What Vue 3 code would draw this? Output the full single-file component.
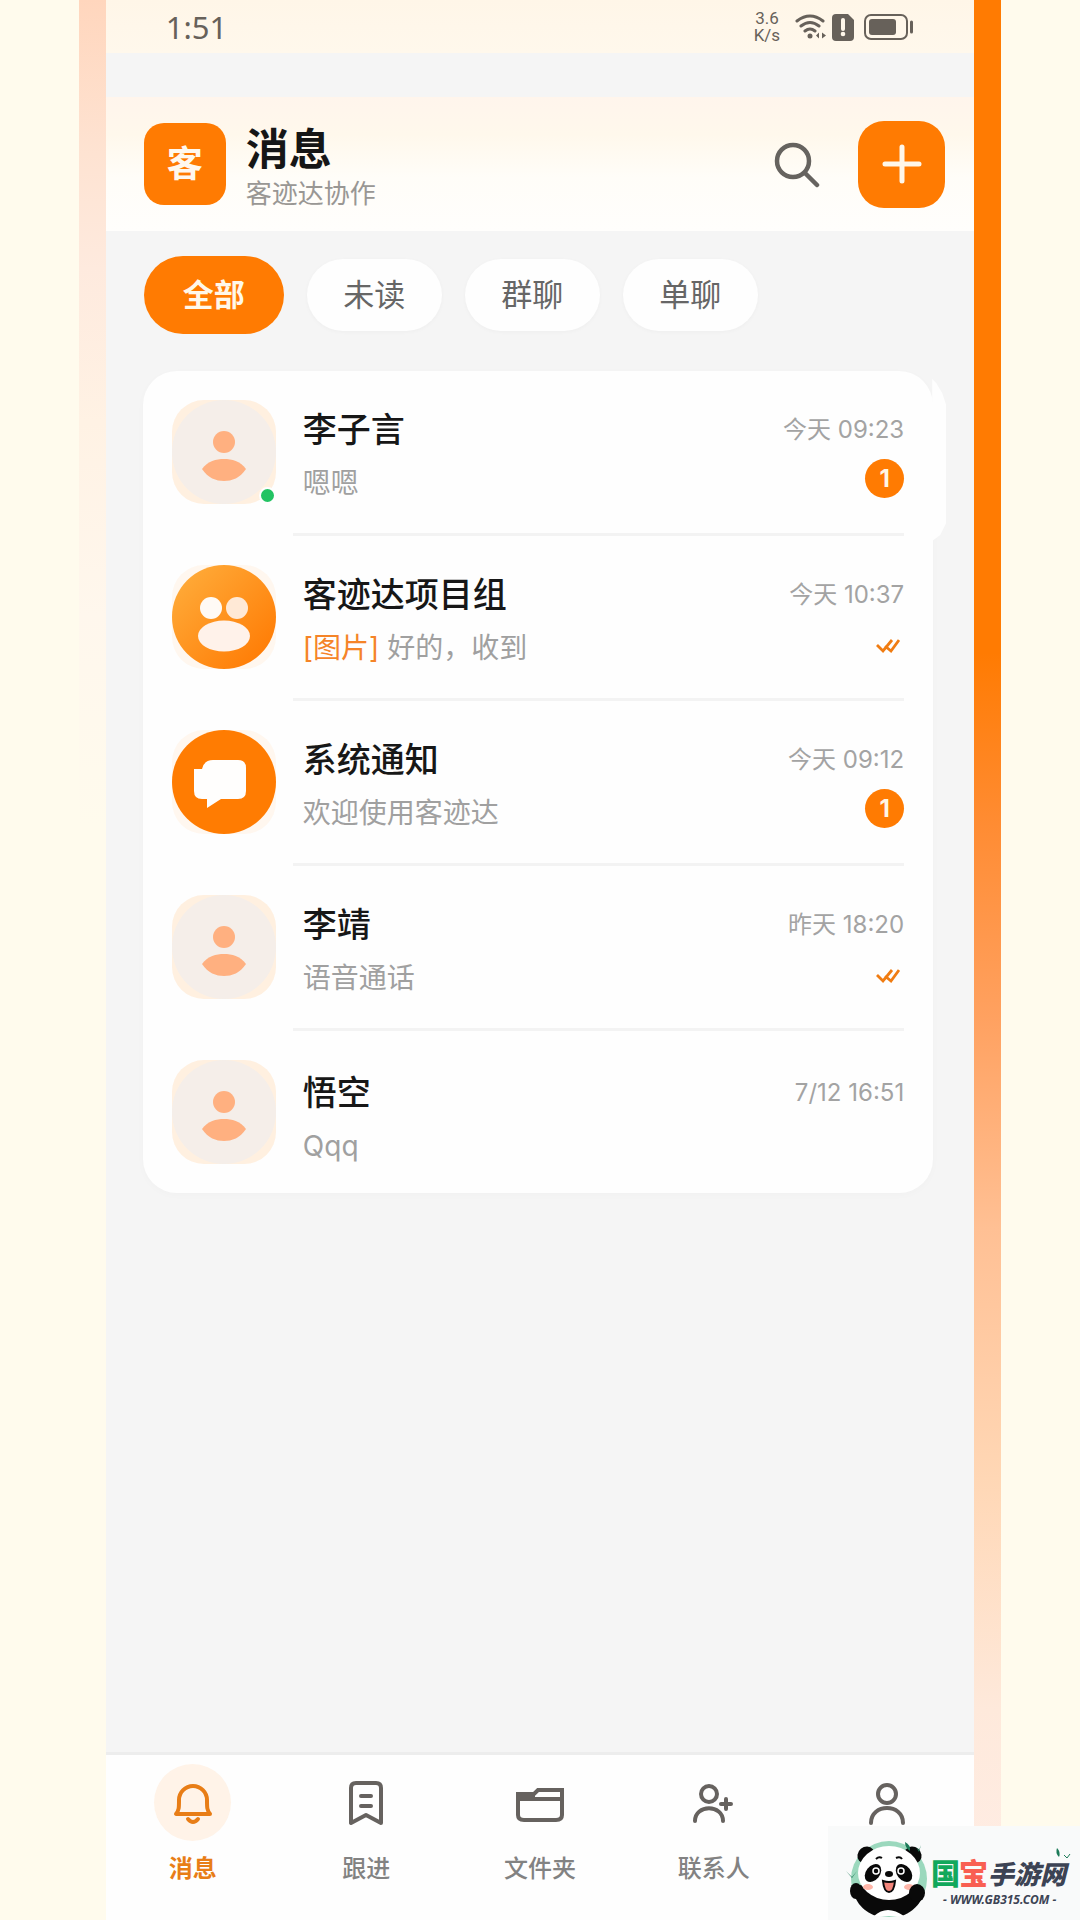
<script setup>
import { ref } from 'vue'

const filters = ['全部', '未读', '群聊', '单聊']
const activeFilter = ref('全部')

const chats = [
  { name: '李子言', text: '嗯嗯', time: '今天 09:23', avatar: 'person', online: true, unread: 1 },
  { name: '客迹达项目组', tag: '[图片]', text: '好的，收到', time: '今天 10:37', avatar: 'group', read: true },
  { name: '系统通知', text: '欢迎使用客迹达', time: '今天 09:12', avatar: 'system', unread: 1 },
  { name: '李靖', text: '语音通话', time: '昨天 18:20', avatar: 'person', read: true },
  { name: '悟空', text: 'Qqq', time: '7/12 16:51', avatar: 'person' },
]

const tabs = [
  { icon: 'bell', label: '消息' },
  { icon: 'bookmark', label: '跟进' },
  { icon: 'folder', label: '文件夹' },
  { icon: 'contacts', label: '联系人' },
  { icon: 'user', label: '' },
]
const activeTab = ref('bell')
</script>

<template>
  <div class="page">
    <div class="edge edge-left"></div>
    <main class="phone">
      <div class="status">
        <span class="clock">1:51</span>
        <div class="status-icons">
          <div class="speed">
            <span>3.6</span>
            <span>K/s</span>
          </div>
          <svg width="32" height="28" viewBox="0 0 32 28" fill="none" stroke="#67615a" stroke-width="3" stroke-linecap="round">
            <path d="M2 8Q15-2 28 8M6 13Q15 6 24 13M10 18Q15 14 20 18" />
            <circle cx="15" cy="23" r="2.500" fill="#67615a" stroke="none" />
            <path d="M24 19.500v6l-3-3zM27 19.500v6l4-3z" fill="#67615a" stroke="none" />
          </svg>
          <svg class="sim" width="22" height="28" viewBox="0 0 22 28">
            <path d="M4 1h12l6 6v17q0 4-4 4H4q-4 0-4-4V5q0-4 4-4z" fill="#67615a" />
            <path d="M11 7v9" stroke="#fff7ea" stroke-width="4" stroke-linecap="round" />
            <circle cx="11" cy="21" r="2.300" fill="#fff7ea" />
          </svg>
          <svg class="battery" width="50" height="28" viewBox="0 0 50 28">
            <rect x="1" y="2" width="42" height="24" rx="6" fill="none" stroke="#67615a" stroke-width="2" />
            <rect x="5" y="6" width="27" height="16" rx="3" fill="#67615a" />
            <path d="M47.500 9v10" stroke="#67615a" stroke-width="3" stroke-linecap="round" />
          </svg>
        </div>
      </div>

      <header class="header">
        <div class="logo">客</div>
        <div class="titles">
          <h1>消息</h1>
          <p>客迹达协作</p>
        </div>
        <button class="search" type="button" aria-label="搜索">
          <svg width="48" height="48" viewBox="0 0 48 48" fill="none" stroke="#66635f" stroke-width="4.500" stroke-linecap="round">
            <circle cx="20" cy="21" r="16" />
            <path d="M32 33l12 12" />
          </svg>
        </button>
        <button class="add" type="button" aria-label="新建">
          <svg width="40" height="40" viewBox="0 0 40 40" stroke="#fff7ea" stroke-width="5" stroke-linecap="round">
            <path d="M20 3v34M3 20h34" />
          </svg>
        </button>
      </header>

      <div class="filters">
        <button
          v-for="f in filters"
          :key="f"
          type="button"
          class="chip"
          :class="{ active: f === activeFilter }"
          @click="activeFilter = f"
        >{{ f }}</button>
      </div>

      <div class="list-wrap">
        <ul class="list">
          <li v-for="c in chats" :key="c.name" class="chat">
            <div class="avatar" :class="c.avatar">
              <svg v-if="c.avatar === 'person'" viewBox="0 0 104 104">
                <circle cx="52" cy="52" r="52" fill="#f5eee9" />
                <circle cx="52" cy="42" r="11" fill="#ffb080" />
                <path d="M30 69C36 61 44 59 52 59S68 61 74 69C68 78 60 81 52 81S36 78 30 69z" fill="#ffb080" />
              </svg>
              <svg v-else-if="c.avatar === 'group'" viewBox="0 0 104 104">
                <defs>
                  <linearGradient id="groupFill" x1="0" y1="0" x2="1" y2="1">
                    <stop offset="0.100" stop-color="#ffaa38" />
                    <stop offset="0.900" stop-color="#ff7c05" />
                  </linearGradient>
                </defs>
                <circle cx="52" cy="52" r="52" fill="url(#groupFill)" />
                <circle cx="39" cy="43" r="11" fill="#fffaf5" />
                <circle cx="65" cy="43" r="11" fill="#ffe9d6" />
                <ellipse cx="52" cy="71" rx="26" ry="15.500" fill="#fff2ea" />
              </svg>
              <svg v-else viewBox="0 0 104 104">
                <circle cx="52" cy="52" r="52" fill="#ff7c02" />
                <path d="M41 30h25q8 0 8 8v23q0 8-8 8H49l-14 9v-9H30q-8 0-8-8V39h8q2-9 11-9z" fill="#fffefd" />
              </svg>
              <span v-if="c.online" class="online"></span>
            </div>
            <div class="body">
              <div class="text">
                <h2>{{ c.name }}</h2>
                <p><span v-if="c.tag" class="tag">{{ c.tag }}</span>{{ c.tag ? ' ' : '' }}{{ c.text }}</p>
              </div>
              <div class="meta">
                <time>{{ c.time }}</time>
                <span v-if="c.unread" class="badge">{{ c.unread }}</span>
                <svg v-if="c.read" class="ticks" width="24" height="16" viewBox="0 0 24 16" fill="none" stroke="#f07c12" stroke-width="2.800">
                  <path d="M1 7l6 6L16 2M9 8l6 5L23 2" />
                </svg>
              </div>
            </div>
          </li>
        </ul>
        <span class="bulge"></span>
      </div>

      <nav class="tabs">
        <button
          v-for="t in tabs"
          :key="t.icon"
          type="button"
          class="tab"
          :class="{ current: t.icon === activeTab }"
          :aria-label="t.label || '我的'"
          @click="activeTab = t.icon"
        >
          <span class="tab-icon">
            <svg width="52" height="52" viewBox="0 0 52 52" fill="none" stroke="currentColor" stroke-width="4" stroke-linecap="round" stroke-linejoin="round">
              <template v-if="t.icon === 'bell'">
                <path d="M9 37h34c-3-4-3-6-3-14a14 14 0 0 0-28 0c0 8 0 10-3 14z" />
                <path d="M21 42q5 6 10 0" />
              </template>
              <template v-else-if="t.icon === 'bookmark'">
                <path d="M11 46V11q0-5 5-5h20q5 0 5 5v35l-15-8z" />
                <path d="M21 19h10M21 29h10" />
              </template>
              <template v-else-if="t.icon === 'folder'">
                <path stroke-linejoin="miter" stroke-linecap="butt" d="M4 38V17h16l4-4h24v25q0 5-6 5H10q-6 0-6-5zM4 22h44" />
                <path d="M4 19h17" stroke-linecap="butt" />
              </template>
              <template v-else-if="t.icon === 'contacts'">
                <circle cx="21" cy="17" r="8" />
                <path d="M7 44c0-17 28-17 28 0M38 22v10M33 27h10" />
              </template>
              <template v-else>
                <circle cx="26" cy="17" r="9" />
                <path d="M10 46c0-20 32-20 32 0" />
              </template>
            </svg>
          </span>
          <span class="tab-label">{{ t.label }}</span>
        </button>
      </nav>
    </main>
    <div class="edge edge-right"></div>

    <aside class="site">
      <svg class="panda" width="84" height="80" viewBox="0 0 84 80">
        <circle cx="45" cy="42" r="38" fill="#9bd8bd" />
        <path d="M10 48C8 62 18 74 32 79h26c15-6 23-18 21-29z" fill="#090909" />
        <path d="M30 79q13-12 30 0z" fill="#fff" />
        <ellipse cx="22" cy="18" rx="9" ry="8" fill="#090909" transform="rotate(-40 22 18)" />
        <ellipse cx="69" cy="18" rx="9" ry="8" fill="#090909" transform="rotate(40 69 18)" />
        <ellipse cx="45" cy="36" rx="31" ry="27" fill="#fff" />
        <ellipse cx="29" cy="36" rx="7" ry="10" fill="#090909" transform="rotate(38 29 36)" />
        <ellipse cx="60" cy="36" rx="7" ry="10" fill="#090909" transform="rotate(-38 60 36)" />
        <circle cx="32" cy="34" r="3" fill="#090909" stroke="#fff" stroke-width="1.500" />
        <circle cx="57" cy="34" r="3" fill="#090909" stroke="#fff" stroke-width="1.500" />
        <ellipse cx="24" cy="50" rx="5" ry="3" fill="#ffb5a8" />
        <ellipse cx="65" cy="50" rx="5" ry="3" fill="#ffb5a8" />
        <ellipse cx="45" cy="37" rx="4" ry="3" fill="#090909" />
        <path d="M39 44q6 2 12 0q-1 11-6 11t-6-11z" fill="#f2857b" stroke="#090909" stroke-width="2" />
        <path d="M32 22q3-3 6-1M52 21q4-2 6 1" stroke="#090909" stroke-width="2" fill="none" />
        <ellipse cx="12" cy="54" rx="6" ry="8" fill="#090909" />
        <ellipse cx="73" cy="56" rx="8" ry="9" fill="#090909" />
        <path d="M2 34l6 6 5-6-5 7zM61 5q6 3 5 9-5-3-5-9zM72 10l3 3 2-5-2 7z" fill="#1c7a58" />
      </svg>
      <div class="site-text">
        <div class="site-name"><span class="guo">国</span><span class="bao">宝</span><span class="rest">手游网</span></div>
        <div class="site-url">- WWW.GB315.COM -</div>
      </div>
      <svg class="leaf" width="16" height="12" viewBox="0 0 16 12">
        <path d="M2 0q4 4 2 9-4-4-2-9z" fill="#1c7a58" />
        <path d="M9 7l3 3 3-4" fill="none" stroke="#1c7a58" />
      </svg>
    </aside>
  </div>
</template>

<style>
body {
  background: #fffbed;
}
</style>

<style scoped>
* {
  box-sizing: border-box;
}
.page {
  position: relative;
  display: grid;
  grid-template-columns: 27fr 868fr 27fr;
  padding: 0 7.3%;
  min-height: 100vh;
  background: #fffbed;
  font-family: Inter, "Noto Sans CJK SC", sans-serif;
  overflow: hidden;
}
h1, h2, p, ul {
  margin: 0;
  padding: 0;
}
button {
  border: 0;
  padding: 0;
  font-family: inherit;
  background: none;
  cursor: pointer;
}
svg {
  display: block;
}
.edge-left {
  background: linear-gradient(#ffd6bd 0%, #fee3d2 8%, #feeade 14%, #fff2e4 22%, #fff7ed 32%, #fffbed 43%);
}
.edge-right {
  background: linear-gradient(#ff7b02 34%, #ff8c33 43%, #ffa160 53%, #ffc094 64%, #ffd7b5 77%, #fee9db 89%, #ffeee7 100%);
}
.phone {
  display: flex;
  flex-direction: column;
  min-width: 0;
  background: #f5f5f5;
}
.status {
  display: flex;
  align-items: center;
  justify-content: space-between;
  height: 53px;
  padding: 0 60px;
  background: linear-gradient(#fff6e8, #fff8ec);
  color: #67615a;
}
.clock {
  font-family: "Noto Sans", sans-serif;
  font-size: 31px;
  line-height: 48px;
}
.status-icons {
  display: flex;
  align-items: center;
}
.speed {
  display: flex;
  flex-direction: column;
  align-items: center;
  gap: 1px;
  margin-right: 15px;
  font-family: Roboto, sans-serif;
  font-size: 17px;
  line-height: 16px;
}
.sim {
  margin-left: 5px;
}
.battery {
  margin-left: 10px;
}
.header {
  display: flex;
  align-items: center;
  height: 134px;
  margin-top: 44px;
  padding: 0 29px 0 38px;
  background: linear-gradient(#fff5ec, #fff8ec 28%, #fffdf8 60%, #fffefc);
}
.logo {
  width: 82px;
  height: 82px;
  border-radius: 20px;
  background: #ff7b02;
  color: #fff8ee;
  font-size: 36px;
  font-weight: 700;
  line-height: 82px;
  text-align: center;
}
.titles {
  flex: 1;
  margin-left: 20px;
  padding-top: 10px;
}
h1 {
  color: #161616;
  font-size: 43px;
  font-weight: 700;
  line-height: 50px;
}
.titles p {
  color: #999794;
  font-size: 26px;
  line-height: 40px;
}
.search {
  margin-right: 37px;
}
.add {
  display: flex;
  align-items: center;
  justify-content: center;
  width: 87px;
  height: 87px;
  border-radius: 26px;
  background: #ff7b02;
}
.filters {
  display: flex;
  align-items: center;
  gap: 23px;
  padding: 25px 38px 0;
}
.chip {
  width: 135px;
  height: 72px;
  border-radius: 36px;
  background: #fefefe;
  box-shadow: 0 1px 4px rgba(0, 0, 0, 0.030);
  color: #666;
  font-size: 31px;
  line-height: 44px;
}
.chip.active {
  width: 140px;
  height: 78px;
  border-radius: 39px;
  background: #ff7b02;
  box-shadow: none;
  color: #fff8ea;
  font-weight: 700;
}
.list-wrap {
  position: relative;
  margin: 37px 41px 0 37px;
}
.list {
  list-style: none;
  padding: 0 29px;
  border-radius: 34px;
  background: #fefefe;
  box-shadow: 0 2px 8px rgba(0, 0, 0, 0.020);
}
.bulge {
  position: absolute;
  top: 8px;
  right: -13px;
  width: 14px;
  height: 162px;
  background: #fefefe;
  clip-path: polygon(0 0, 4px 4px, 10px 14px, 14px 26px, 14px 144px, 8px 156px, 0 162px, 0 20px);
}
.chat {
  display: flex;
  align-items: stretch;
}
.avatar {
  position: relative;
  flex: none;
  width: 104px;
  height: 104px;
  margin: 29px 17px 32px 0;
  border-radius: 32px;
  background: #fff0e0;
}
.chat:last-child .avatar {
  margin-bottom: 29px;
}
.avatar.group,
.avatar.system {
  background: #fff7ef;
}
.online {
  position: absolute;
  right: 0;
  bottom: 0;
  width: 17px;
  height: 17px;
  border: 2px solid #fefefe;
  border-radius: 50%;
  background: #23c363;
}
.body {
  display: flex;
  flex: 1;
  min-width: 0;
  padding: 34px 0 0 10px;
  border-bottom: 3px solid #f3f3f3;
}
.chat:last-child .body {
  border-bottom: 0;
  padding-top: 37px;
}
.text {
  flex: 1;
}
h2 {
  color: #171717;
  font-size: 34px;
  font-weight: 500;
  line-height: 50px;
}
.text p {
  margin-top: 7px;
  color: #a0a0a0;
  font-size: 28px;
  line-height: 42px;
}
.tag {
  color: #f58428;
}
.meta {
  display: flex;
  flex-direction: column;
  align-items: flex-end;
}
time {
  color: #a3a3a3;
  font-size: 24px;
  line-height: 50px;
}
.badge {
  width: 39px;
  height: 39px;
  margin-top: 4px;
  border-radius: 50%;
  background: #ff7b02;
  color: #fff6e6;
  font-size: 24px;
  font-weight: 700;
  line-height: 39px;
  text-align: center;
}
.ticks {
  margin: 18px 4px 0 0;
}
.tabs {
  display: flex;
  height: 168px;
  margin-top: auto;
  border-top: 3px solid #ededed;
  background: #fefefe;
}
.tab {
  display: flex;
  flex: 1;
  flex-direction: column;
  align-items: center;
  padding-top: 9px;
  color: #66625f;
}
.tab-icon {
  display: flex;
  align-items: center;
  justify-content: center;
  width: 77px;
  height: 77px;
  border-radius: 50%;
}
.tab-label {
  margin-top: 10px;
  color: #828282;
  font-size: 24px;
  font-weight: 500;
  line-height: 36px;
}
.current,
.current .tab-label {
  color: #e87d16;
}
.current .tab-label {
  font-weight: 700;
}
.current .tab-icon {
  background: #fff3e8;
}
.site {
  position: absolute;
  right: 0;
  bottom: 0;
  display: flex;
  width: 252px;
  height: 94px;
  padding: 11px 0 0 16px;
  background: #f9fafa;
}
.site-text {
  flex: 1;
  padding: 16px 0 0 3px;
}
.site-name {
  display: flex;
  align-items: center;
  height: 38px;
  font-weight: 900;
  color: #3c4354;
}
.guo {
  width: 28px;
  font-size: 29px;
  color: #12a85c;
}
.bao {
  width: 29px;
  font-size: 29px;
  color: #f95f52;
}
.rest {
  font-size: 26px;
  font-style: italic;
}
.site-url {
  padding-left: 12px;
  color: #3c4354;
  font-family: "Noto Sans", sans-serif;
  font-size: 12px;
  font-style: italic;
  font-weight: 700;
  line-height: 18px;
  white-space: nowrap;
}
.leaf {
  position: absolute;
  top: 22px;
  right: 9px;
}
</style>
